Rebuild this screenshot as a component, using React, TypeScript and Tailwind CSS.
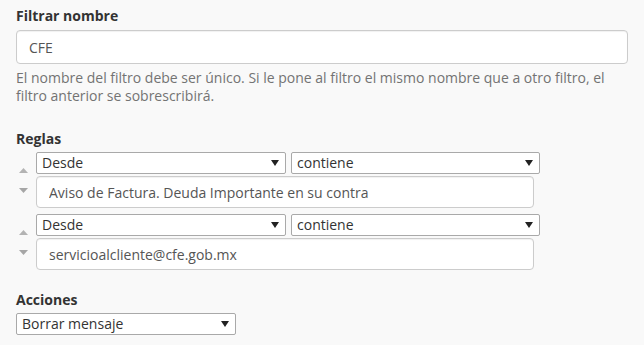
import React from "react";

const Caret = () => (
  <svg width="8" height="6" viewBox="0 0 8 6" className="pointer-events-none absolute right-[7px] top-1/2 -translate-y-1/2">
    <path d="M0 0 H8 L4 6 Z" fill="#222" />
  </svg>
);

const Select = ({ value, width }: { value: string; width: string }) => (
  <div className={`relative ${width}`}>
    <select
      defaultValue={value}
      className="block h-[22px] w-full appearance-none rounded-[2px] border border-[#a9a9a9] bg-white pl-[5px] text-[14px] leading-[20px] text-[#333] outline-none"
    >
      <option>{value}</option>
    </select>
    <Caret />
  </div>
);

const RuleRow = ({ text }: { text: string }) => (
  <div className="flex">
    {/* Reorder arrows */}
    <div className="flex w-[20px] flex-col items-start justify-center gap-[15px] pl-[3px]">
      <svg width="9" height="5" viewBox="0 0 9 5">
        <path d="M0 5 L4.5 0 L9 5 Z" fill="#b3b3b3" />
      </svg>
      <svg width="9" height="5" viewBox="0 0 9 5">
        <path d="M0 0 L9 0 L4.5 5 Z" fill="#a6a6a6" />
      </svg>
    </div>
    <div className="flex flex-col">
      <div className="flex gap-[5px]">
        <Select value="Desde" width="w-[250px]" />
        <Select value="contiene" width="w-[249px]" />
      </div>
      <input
        defaultValue={text}
        className="mt-[2px] block h-[32px] w-[498px] rounded-[4px] border border-[#ccc] bg-white px-[12px] text-[14px] text-[#555] shadow-[inset_0_1px_1px_rgba(0,0,0,0.06)] outline-none"
      />
    </div>
  </div>
);

const App: React.FC = () => {
  return (
    <div
      className="min-h-[345px] bg-[#f9f9f9] px-4 pt-[6px]"
      style={{ fontFamily: '"Open Sans", sans-serif' }}
    >
      <label className="mb-1 block text-[14px] font-bold leading-5 text-[#333]">Filtrar nombre</label>
      <input
        defaultValue="CFE"
        className="block h-[34px] w-[612px] rounded-[4px] border border-[#ccc] bg-white px-[12px] text-[14px] text-[#555] shadow-[inset_0_1px_1px_rgba(0,0,0,0.06)] outline-none"
      />
      <p className="mt-[5px] w-[612px] text-[14px] leading-[18px] text-[#737373]">
        El nombre del filtro debe ser único. Si le pone al filtro el mismo nombre que a otro filtro, el filtro anterior se sobrescribirá.
      </p>

      <label className="mt-[24px] mb-[3px] block text-[14px] font-bold leading-5 text-[#333]">Reglas</label>
      <div className="flex flex-col gap-[6px]">
        <RuleRow text="Aviso de Factura. Deuda Importante en su contra" />
        <RuleRow text="servicioalcliente@cfe.gob.mx" />
      </div>

      <label className="mt-[20px] mb-[3px] block text-[14px] font-bold leading-5 text-[#333]">Acciones</label>
      <Select value="Borrar mensaje" width="w-[220px]" />
    </div>
  );
};

export default App;
